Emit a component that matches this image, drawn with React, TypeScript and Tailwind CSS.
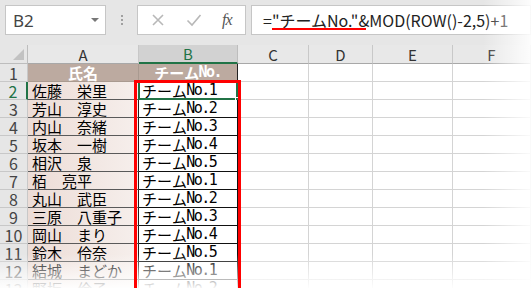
import React from "react";

const JP = "font-['Noto_Sans_CJK_JP','Noto_Sans',sans-serif]";

function Mono({ t }: { t: string }) {
  return (
    <>
      {[...t].map((c, i) =>
        c.charCodeAt(0) < 0x2000 ? (
          <span
            key={i}
            className="inline-flex w-[0.5em] justify-center font-['DejaVu_Sans_Mono',monospace]"
          >
            {c}
          </span>
        ) : (
          <span key={i} className="inline-flex w-[1em] justify-center">
            {c}
          </span>
        )
      )}
    </>
  );
}

const names = [
  "佐藤　栄里",
  "芳山　淳史",
  "内山　奈緒",
  "坂本　一樹",
  "相沢　泉",
  "栢　亮平",
  "丸山　武臣",
  "三原　八重子",
  "岡山　まり",
  "鈴木　伶奈",
  "結城　まどか",
  "野坂　伶子",
];

const cols = ["A", "B", "C", "D", "E", "F"];

export default function App() {
  return (
    <div className={`relative w-[531px] h-[288px] overflow-hidden bg-white ${JP}`}>
      {/* top bar */}
      <div className="h-[45px] bg-[#e6e6e6] flex items-start pt-[5px] pl-[5px]">
        <div className="w-[101px] h-[30px] bg-white border border-[#c6c6c6] flex items-center justify-between pl-[7px] pr-[6px]">
          <span className="text-[17px] text-[#444] font-['Noto_Sans',sans-serif] leading-none">B2</span>
          <span className="w-0 h-0 border-l-[4px] border-r-[4px] border-t-[4px] border-l-transparent border-r-transparent border-t-[#777]" />
        </div>
        <div className="w-[31px] h-[30px] flex flex-col items-center justify-center gap-[2px]">
          <span className="w-[2px] h-[2px] bg-[#a0a0a0]" />
          <span className="w-[2px] h-[2px] bg-[#a0a0a0]" />
          <span className="w-[2px] h-[2px] bg-[#a0a0a0]" />
        </div>
        <div className="w-[109px] h-[30px] bg-white border border-[#c6c6c6] flex items-center pl-[12px]">
          <svg width="14" height="14" viewBox="0 0 14 14" className="ml-[1px]">
            <path d="M2 2 L12 12 M12 2 L2 12" stroke="#b8b8b8" strokeWidth="1.6" fill="none" />
          </svg>
          <svg width="16" height="14" viewBox="0 0 16 14" className="ml-[21px]">
            <path d="M1.5 7.5 L6 12 L14.5 2" stroke="#b8b8b8" strokeWidth="1.6" fill="none" />
          </svg>
          <span className="ml-[20px] text-[16px] italic text-[#555] font-['Liberation_Serif',serif] leading-none tracking-[-1px]">fx</span>
        </div>
        <div className="ml-[5px] flex-1 h-[30px] bg-white border border-[#c6c6c6] flex items-center pl-[11px]">
          <span className="text-[16px] text-[#222] leading-none whitespace-nowrap">
            ="チームNo."&amp;MOD(ROW()-2,5)+1
          </span>
        </div>
      </div>

      {/* grid */}
      <div className="grid grid-cols-[28px_111px_99px_71px_64px_80px_1fr] grid-rows-[19px_repeat(13,18px)]">
        {/* header row */}
        <div className="bg-[#e6e6e6] border-r border-b border-[#bdbdbd] flex items-end justify-end pr-[3px] pb-[3px]">
          <svg width="11" height="11" viewBox="0 0 11 11">
            <path d="M11 0 L11 11 L0 11 Z" fill="#c2c2c2" />
          </svg>
        </div>
        {cols.map((c) =>
          c === "B" ? (
            <div
              key={c}
              className="bg-[#d2d2d2] border-r border-[#bdbdbd] border-b-2 border-b-[#217346] flex items-center justify-center text-[15px] text-[#217346] leading-none"
            >
              {c}
            </div>
          ) : (
            <div
              key={c}
              className="bg-[#e8e8e8] border-r border-[#c8c8c8] border-b border-b-[#a8a8a8] flex items-center justify-center text-[15px] text-[#333] leading-none"
            >
              {c}
            </div>
          )
        )}

        {/* row 1 */}
        <div className="bg-[#e6e6e6] border-r border-b border-[#c8c8c8] flex items-center justify-center text-[16px] text-[#444] leading-none">
          1
        </div>
        <div className="bg-[#bcaaa0] border-r border-b border-[#a99a90] flex items-center justify-center text-[15px] font-bold text-white leading-none">
          <Mono t="氏名" />
        </div>
        <div className="bg-[#bcaaa0] border-r border-b border-[#222] flex items-center justify-center text-[15px] font-bold text-white leading-none overflow-hidden whitespace-nowrap">
          <Mono t="チームNo." />
        </div>
        {[0, 1, 2, 3].map((k) => (
          <div key={k} className="border-r border-b border-[#d4d4d4]" />
        ))}

        {names.map((n, i) => {
          const row = i + 2;
          const sel = row === 2;
          return (
            <React.Fragment key={row}>
              <div
                className={`bg-[#e6e6e6] border-b border-[#c8c8c8] flex items-center justify-center text-[16px] leading-none ${
                  sel ? "text-[#217346] border-r-2 border-r-[#217346]" : "text-[#444] border-r border-r-[#c8c8c8]"
                }`}
              >
                {row}
              </div>
              <div className="bg-linear-to-r from-[#ecdcd6] to-[#f6efec] border-r border-r-[#222] border-b border-b-[#5a5a5a] flex items-center pl-[4px] text-[15px] text-black leading-none whitespace-nowrap">
                <Mono t={n} />
              </div>
              <div className="relative bg-white border-r border-b border-[#111] flex items-center pl-[3px] text-[15px] text-black leading-none whitespace-nowrap">
                <Mono t={`チームNo.${(i % 5) + 1}`} />
                {sel && (
                  <>
                    <div className="absolute -left-[1px] -top-[1px] -right-[1px] -bottom-[1px] border-2 border-[#217346]" />
                    <div className="absolute -right-[4px] -bottom-[4px] w-[6px] h-[6px] bg-[#217346] border border-white" />
                  </>
                )}
              </div>
              {[0, 1, 2, 3].map((k) => (
                <div key={k} className="border-r border-b border-[#d4d4d4]" />
              ))}
            </React.Fragment>
          );
        })}
      </div>

      {/* fades */}
      <div className="absolute left-0 right-0 bottom-0 h-[34px] bg-linear-to-b from-white/0 to-white/95 pointer-events-none" />
      <div className="absolute top-0 right-0 bottom-0 w-[48px] bg-linear-to-r from-white/0 to-white/90 pointer-events-none" />

      {/* red annotations */}
      <div className="absolute left-[272px] top-[28px] w-[94px] h-[2px] bg-[#ff0000]" />
      <div className="absolute left-[134px] top-[80px] w-[107px] h-[230px] border-[3px] border-[#ff0000]" />
    </div>
  );
}
